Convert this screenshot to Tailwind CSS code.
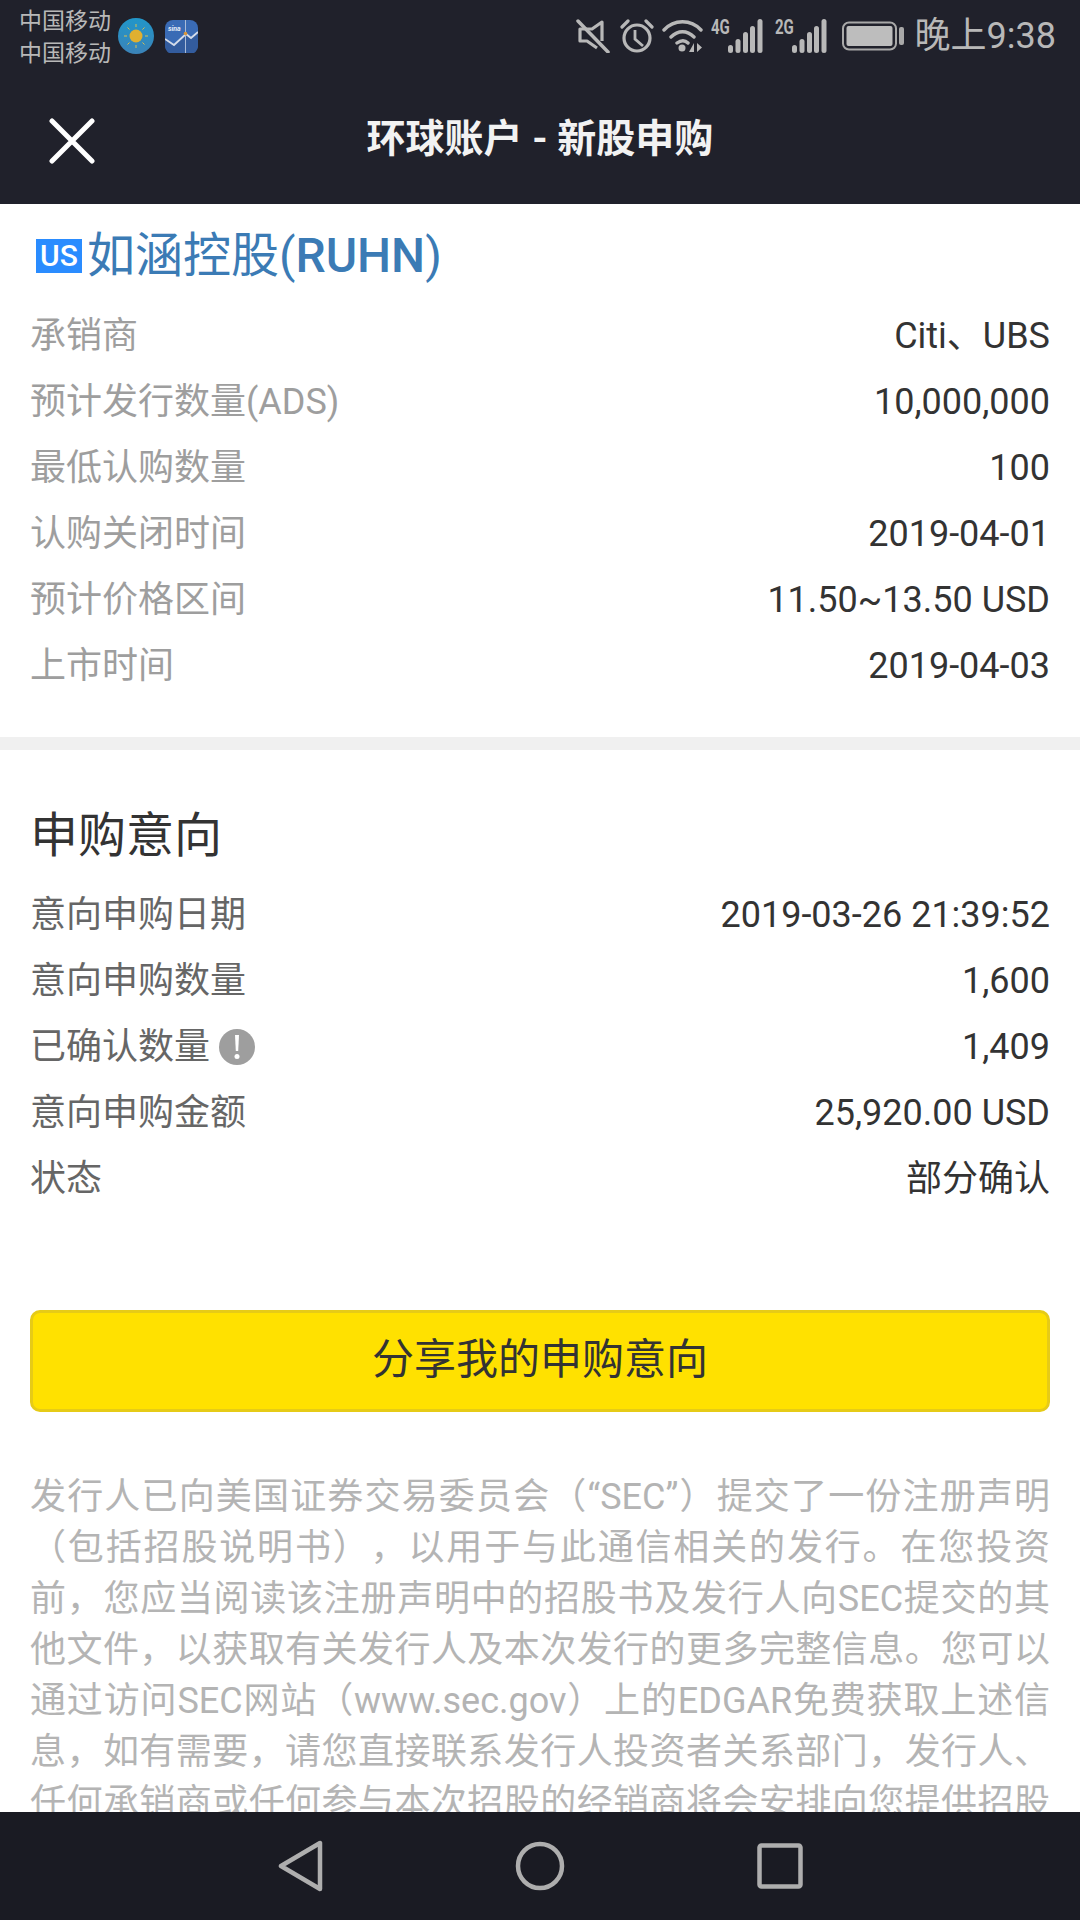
<!DOCTYPE html>
<html lang="zh-CN">
<head>
    <meta charset="UTF-8">
    <meta name="viewport" content="width=device-width, initial-scale=1.0">
    <title>环球账户 - 新股申购</title>
    <script src="https://cdn.jsdelivr.net/npm/@tailwindcss/browser@4"></script>
</head>
<body class="bg-white font-['Roboto','Noto_Sans_CJK_SC',sans-serif]">
    <div class="w-[1080px] h-[1920px] flex flex-col overflow-hidden">
        <!-- Status bar -->
        <div class="h-[72px] shrink-0 bg-[#20212b] flex items-center text-[#b8b8b8]">
            <div class="w-[96px] ml-[19px] text-[23px] leading-[32px] pt-[3px] whitespace-nowrap">
                <div>中国移动</div>
                <div>中国移动</div>
            </div>
            <svg class="ml-[3px]" width="36" height="36" viewBox="0 0 36 36">
                <defs>
                    <linearGradient id="sky" x1="0" y1="0" x2="0" y2="1">
                        <stop offset="0" stop-color="#2196c9"/>
                        <stop offset="1" stop-color="#3b83b8"/>
                    </linearGradient>
                </defs>
                <circle cx="18" cy="18" r="18" fill="url(#sky)"/>
                <circle cx="18" cy="18" r="6.5" fill="#e0b030"/>
                <path d="M18 6v3M18 27v3M6 18h3M27 18h3M9.5 9.5l2 2M24.5 24.5l2 2M9.5 26.500l2-2M24.5 11.500l2-2" stroke="#d8c050" stroke-width="1"/>
            </svg>
            <svg class="ml-[11px]" width="33" height="33" viewBox="0 0 33 33">
                <rect width="33" height="33" rx="8" fill="#3a6bb5"/>
                <path d="M0 19l9 6 12-11 5 4 7-6v14a8 8 0 0 1-8 8H8a8 8 0 0 1-8-8z" fill="#335c9e"/>
                <path d="M0 19l9 6 12-11 5 4 7-6" fill="none" stroke="#d4dcea" stroke-width="1.800"/>
                <path d="M20.500 0v33" stroke="#a9bbd8" stroke-width="1"/>
                <circle cx="20.500" cy="13.500" r="1.800" fill="#d9963a"/>
                <text x="3" y="11" font-size="7" font-style="italic" font-weight="700" fill="#e8eef8">sina</text>
            </svg>
            <div class="ml-auto mr-[24px] flex items-center">
                <!-- mute -->
                <svg width="34" height="34" viewBox="0 0 34 34" fill="none" stroke="#b8b8b8" stroke-width="3.200">
                    <path d="M26 22V3L16 10H4v12h7l10 7" stroke-linejoin="round"/>
                    <path d="M2 2l30 31" stroke-linecap="round" stroke-width="3.500"/>
                </svg>
                <!-- alarm -->
                <svg class="ml-[10px]" width="34" height="34" viewBox="0 0 34 34" fill="none" stroke="#b8b8b8" stroke-width="3.200">
                    <circle cx="17" cy="19" r="13"/>
                    <path d="M15 11v9l8 7" stroke-width="2.800"/>
                    <path d="M2 8l6-6M26 2l6 6" stroke-linecap="round"/>
                </svg>
                <!-- wifi -->
                <svg class="ml-[8px]" width="42" height="34" viewBox="0 0 42 34" fill="none" stroke="#b8b8b8" stroke-width="3.400">
                    <path d="M2 11C12 0 29 0 39 11M9 18c7-7 16-7 23 0M15 24c4-3 8-3 11 0" stroke-linecap="round"/>
                    <circle cx="20" cy="29" r="3.500" fill="#b8b8b8" stroke="none"/>
                    <path d="M32 24v9h-5zM35 24l5 4.500-5 4.500z" fill="#b8b8b8" stroke="none"/>
                </svg>
                <!-- 4G signal -->
                <div class="relative ml-[7px] w-[52px] h-[36px]">
                    <span class="absolute left-0 top-[-3px] text-[20px] leading-[24px] font-bold text-[#b8b8b8] scale-x-75 origin-left">4G</span>
                    <svg class="absolute right-0 top-0" width="35" height="36" viewBox="0 0 35 36" fill="#b8b8b8">
                        <rect x="0" y="27" width="5" height="8" rx="2.500"/>
                        <rect x="7.500" y="21" width="5" height="14" rx="2.500"/>
                        <rect x="15" y="14" width="5" height="21" rx="2.500"/>
                        <rect x="22" y="8" width="5" height="27" rx="2.500"/>
                        <rect x="29.500" y="1" width="5" height="34" rx="2.500"/>
                    </svg>
                </div>
                <!-- 2G signal -->
                <div class="relative ml-[12px] w-[52px] h-[36px]">
                    <span class="absolute left-0 top-[-3px] text-[20px] leading-[24px] font-bold text-[#b8b8b8] scale-x-75 origin-left">2G</span>
                    <svg class="absolute right-0 top-0" width="35" height="36" viewBox="0 0 35 36" fill="#b8b8b8">
                        <rect x="0" y="27" width="5" height="8" rx="2.500"/>
                        <rect x="7.500" y="21" width="5" height="14" rx="2.500"/>
                        <rect x="15" y="14" width="5" height="21" rx="2.500"/>
                        <rect x="22" y="8" width="5" height="27" rx="2.500"/>
                        <rect x="29.500" y="1" width="5" height="34" rx="2.500"/>
                    </svg>
                </div>
                <!-- battery -->
                <svg class="ml-[15px]" width="62" height="30" viewBox="0 0 62 30">
                    <rect x="1" y="1.500" width="53" height="27" rx="6" fill="none" stroke="#a8a8a8" stroke-width="2"/>
                    <rect x="4.500" y="5" width="46" height="20" rx="2" fill="#bdbdbd"/>
                    <rect x="57" y="6" width="5" height="18" rx="2" fill="#a8a8a8"/>
                </svg>
                <span class="ml-[11px] text-[36px] leading-[40px]">晚上9:38</span>
            </div>
        </div>

        <!-- Title bar -->
        <header class="h-[132px] shrink-0 bg-[#20212b] relative flex items-center justify-center">
            <svg class="absolute left-[49px] top-[46px]" width="46" height="46" viewBox="0 0 46 46" fill="none" stroke="#fff" stroke-width="5" stroke-linecap="round">
                <path d="M3 3l40 40M43 3L3 43"/>
            </svg>
            <h1 class="text-[39px] font-bold text-[#f2f2f2] pt-[3px]">环球账户 - 新股申购</h1>
        </header>

        <!-- Content -->
        <main class="flex-1 overflow-hidden">
            <div class="h-[99px] pl-[36px] pt-[4px] flex items-center">
                <span class="w-[46px] h-[34px] bg-[#2a8cff] text-white text-[30px] leading-[34px] font-medium text-center">US</span>
                <span class="ml-[5px] text-[48px] leading-[60px] text-[#3b7bb5]">如涵控股(<span class="font-medium">RUHN</span>)</span>
            </div>
            <div class="px-[30px] text-[36px] text-[#333]">
                <div class="h-[66px] flex items-center justify-between"><span class="text-[#9e9e9e]">承销商</span><span>Citi、UBS</span></div>
                <div class="h-[66px] flex items-center justify-between"><span class="text-[#9e9e9e]">预计发行数量(ADS)</span><span>10,000,000</span></div>
                <div class="h-[66px] flex items-center justify-between"><span class="text-[#9e9e9e]">最低认购数量</span><span>100</span></div>
                <div class="h-[66px] flex items-center justify-between"><span class="text-[#9e9e9e]">认购关闭时间</span><span>2019-04-01</span></div>
                <div class="h-[66px] flex items-center justify-between"><span class="text-[#9e9e9e]">预计价格区间</span><span>11.50~13.50 USD</span></div>
                <div class="h-[66px] flex items-center justify-between"><span class="text-[#9e9e9e]">上市时间</span><span>2019-04-03</span></div>
            </div>

            <div class="h-[13px] mt-[38px] bg-[#f0f0f0]"></div>

            <div class="px-[30px]">
                <h2 class="pt-[56px] pb-[16px] text-[48px] leading-[60px] text-[#333]">申购意向</h2>
                <div class="text-[36px] text-[#333]">
                    <div class="h-[66px] flex items-center justify-between"><span class="text-[#666]">意向申购日期</span><span>2019-03-26 21:39:52</span></div>
                    <div class="h-[66px] flex items-center justify-between"><span class="text-[#666]">意向申购数量</span><span>1,600</span></div>
                    <div class="h-[66px] flex items-center justify-between">
                        <span class="flex items-center text-[#666]">已确认数量
                            <svg class="ml-[9px]" width="36" height="36" viewBox="0 0 36 36">
                                <circle cx="18" cy="18" r="18" fill="#9e9e9e"/>
                                <path d="M16 6h4l-.8 16h-2.400z" fill="#fff"/>
                                <circle cx="18" cy="27.500" r="2.500" fill="#fff"/>
                            </svg>
                        </span>
                        <span>1,409</span>
                    </div>
                    <div class="h-[66px] flex items-center justify-between"><span class="text-[#666]">意向申购金额</span><span>25,920.00 USD</span></div>
                    <div class="h-[66px] flex items-center justify-between"><span class="text-[#666]">状态</span><span>部分确认</span></div>
                </div>

                <button class="mt-[98px] w-full h-[102px] rounded-[10px] bg-[#ffe100] border-[3px] border-[#e6cb17] text-[42px] text-[#333] pb-[3px]">分享我的申购意向</button>

                <p class="mt-[60px] text-[36px] leading-[51px] text-[#b4b4b4] text-justify [text-spacing-trim:space-all]">发行人已向美国证券交易委员会（“SEC”）提交了一份注册声明（包括招股说明书），以用于与此通信相关的发行。在您投资前，您应当阅读该注册声明中的招股书及发行人向SEC提交的其他文件，以获取有关发行人及本次发行的更多完整信息。您可以通过访问SEC网站（www.sec.gov）上的EDGAR免费获取上述信息，如有需要，请您直接联系发行人投资者关系部门，发行人、任何承销商或任何参与本次招股的经销商将会安排向您提供招股说明书。</p>
            </div>
        </main>

        <!-- Navigation bar -->
        <nav class="h-[108px] shrink-0 bg-[#1a1b23] flex items-center justify-center gap-[192px]">
            <svg width="46" height="52" viewBox="0 0 46 52" fill="none" stroke="#aeaeae" stroke-width="4.500" stroke-linejoin="round">
                <path d="M43 3v46L4 26z"/>
            </svg>
            <svg width="50" height="50" viewBox="0 0 50 50" fill="none" stroke="#aeaeae" stroke-width="4.500">
                <circle cx="25" cy="25" r="22"/>
            </svg>
            <svg width="46" height="46" viewBox="0 0 46 46" fill="none" stroke="#aeaeae" stroke-width="4.500" stroke-linejoin="round">
                <rect x="2.500" y="2.500" width="41" height="41" rx="2"/>
            </svg>
        </nav>
    </div>
</body>
</html>
